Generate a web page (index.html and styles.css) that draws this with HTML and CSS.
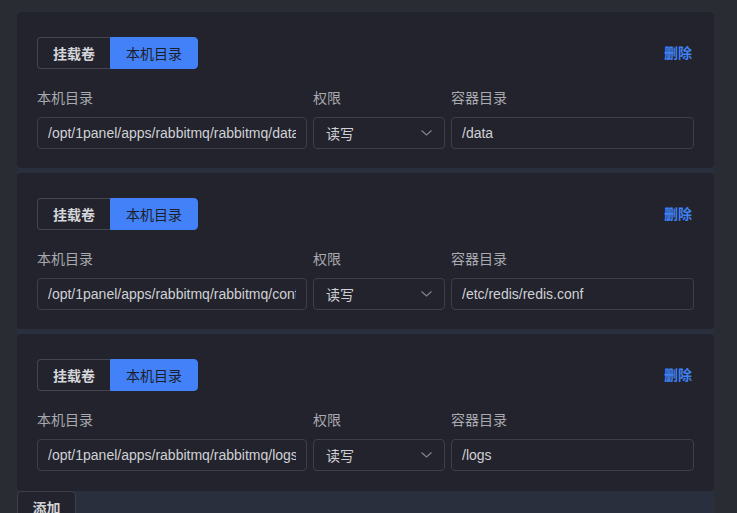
FILE: index.html
```html
<!DOCTYPE html>
<html lang="zh-CN">
<head>
  <meta charset="UTF-8">
  <title>挂载目录</title>
  <link rel="stylesheet" href="styles.css">
</head>
<body>

  <!-- 挂载列表 -->
  <div class="volumes">

    <div class="volume-card">
      <div class="card-head">
        <div class="seg">
          <button class="seg-btn">挂载卷</button>
          <button class="seg-btn active">本机目录</button>
        </div>
        <a href="#" class="del">删除</a>
      </div>
      <div class="fields">
        <div class="field f-host">
          <label>本机目录</label>
          <input class="inp" type="text" value="/opt/1panel/apps/rabbitmq/rabbitmq/data">
        </div>
        <div class="field f-mode">
          <label>权限</label>
          <div class="select">
            <span>读写</span>
            <svg width="11" height="6" viewBox="0 0 11 6"><path d="M0.5 0.5 L5.5 5 L10.5 0.5" fill="none" stroke="#85868d" stroke-width="1.1"/></svg>
          </div>
        </div>
        <div class="field f-cont">
          <label>容器目录</label>
          <input class="inp" type="text" value="/data">
        </div>
      </div>
    </div>

    <div class="volume-card">
      <div class="card-head">
        <div class="seg">
          <button class="seg-btn">挂载卷</button>
          <button class="seg-btn active">本机目录</button>
        </div>
        <a href="#" class="del">删除</a>
      </div>
      <div class="fields">
        <div class="field f-host">
          <label>本机目录</label>
          <input class="inp" type="text" value="/opt/1panel/apps/rabbitmq/rabbitmq/conf">
        </div>
        <div class="field f-mode">
          <label>权限</label>
          <div class="select">
            <span>读写</span>
            <svg width="11" height="6" viewBox="0 0 11 6"><path d="M0.5 0.5 L5.5 5 L10.5 0.5" fill="none" stroke="#85868d" stroke-width="1.1"/></svg>
          </div>
        </div>
        <div class="field f-cont">
          <label>容器目录</label>
          <input class="inp" type="text" value="/etc/redis/redis.conf">
        </div>
      </div>
    </div>

    <div class="volume-card">
      <div class="card-head">
        <div class="seg">
          <button class="seg-btn">挂载卷</button>
          <button class="seg-btn active">本机目录</button>
        </div>
        <a href="#" class="del">删除</a>
      </div>
      <div class="fields">
        <div class="field f-host">
          <label>本机目录</label>
          <input class="inp" type="text" value="/opt/1panel/apps/rabbitmq/rabbitmq/logs">
        </div>
        <div class="field f-mode">
          <label>权限</label>
          <div class="select">
            <span>读写</span>
            <svg width="11" height="6" viewBox="0 0 11 6"><path d="M0.5 0.5 L5.5 5 L10.5 0.5" fill="none" stroke="#85868d" stroke-width="1.1"/></svg>
          </div>
        </div>
        <div class="field f-cont">
          <label>容器目录</label>
          <input class="inp" type="text" value="/logs">
        </div>
      </div>
    </div>

    <div>
      <button class="add-btn">添加</button>
    </div>
  </div>

</body>
</html>
```

FILE: styles.css
```css
body {
  margin: 0;
  background: #2a2c33;
  font-family: "Liberation Sans", "Noto Sans CJK SC", sans-serif;
  font-size: 14px;
  color: #cfd0d4;
}

/* 外层容器 */
.volumes {
  width: 697px;
  margin: 12px 0 0 17px;
  background: #292f3c;
  display: flex;
  flex-direction: column;
  gap: 5px;
}

/* 单个挂载卡片 */
.volume-card {
  background: #22232c;
  border-radius: 4px;
  padding: 25px 20px 19px;
}

.volume-card:nth-child(3) {
  padding-bottom: 20px;
}

.card-head {
  display: flex;
  justify-content: space-between;
  align-items: center;
}

/* 分段按钮 */
.seg {
  display: flex;
}

.seg-btn {
  height: 32px;
  padding: 0 15px;
  border: 1px solid #44454e;
  background: #22232c;
  color: #d6d7db;
  font-family: inherit;
  font-size: 14px;
  font-weight: bold;
  cursor: pointer;
}

.seg-btn:first-child {
  border-radius: 4px 0 0 4px;
  border-right: none;
}

.seg-btn.active {
  background: #4281f7;
  border-color: #4281f7;
  color: #1e2029;
  font-weight: normal;
  border-radius: 0 4px 4px 0;
}

.del {
  color: #3f82f5;
  text-decoration: none;
  font-weight: bold;
  margin-right: 2px;
  line-height: 20px;
}

/* 输入字段 */
.fields {
  display: flex;
  gap: 6px;
  margin-top: 18px;
}

.field label {
  display: block;
  line-height: 22px;
  color: #a9aab0;
  margin-bottom: 8px;
}

.f-host { width: 270px; }
.f-mode { width: 132px; }
.f-cont { flex: 1; }

.inp,
.select {
  box-sizing: border-box;
  width: 100%;
  height: 32px;
  border: 1px solid #3e3f48;
  border-radius: 4px;
  background: #22232c;
  color: #d0d1d5;
  font-family: inherit;
  font-size: 14px;
  padding: 0 10px;
  outline: none;
}

.select {
  display: flex;
  align-items: center;
  justify-content: space-between;
  padding: 0 12px 0 12px;
}

/* 添加按钮 */
.add-btn {
  height: 32px;
  width: 59px;
  border: 1px solid #3e3f48;
  border-radius: 4px;
  background: #22232c;
  color: #d0d1d5;
  font-family: inherit;
  font-size: 14px;
  font-weight: bold;
  margin-top: -5px;
  cursor: pointer;
}
```
